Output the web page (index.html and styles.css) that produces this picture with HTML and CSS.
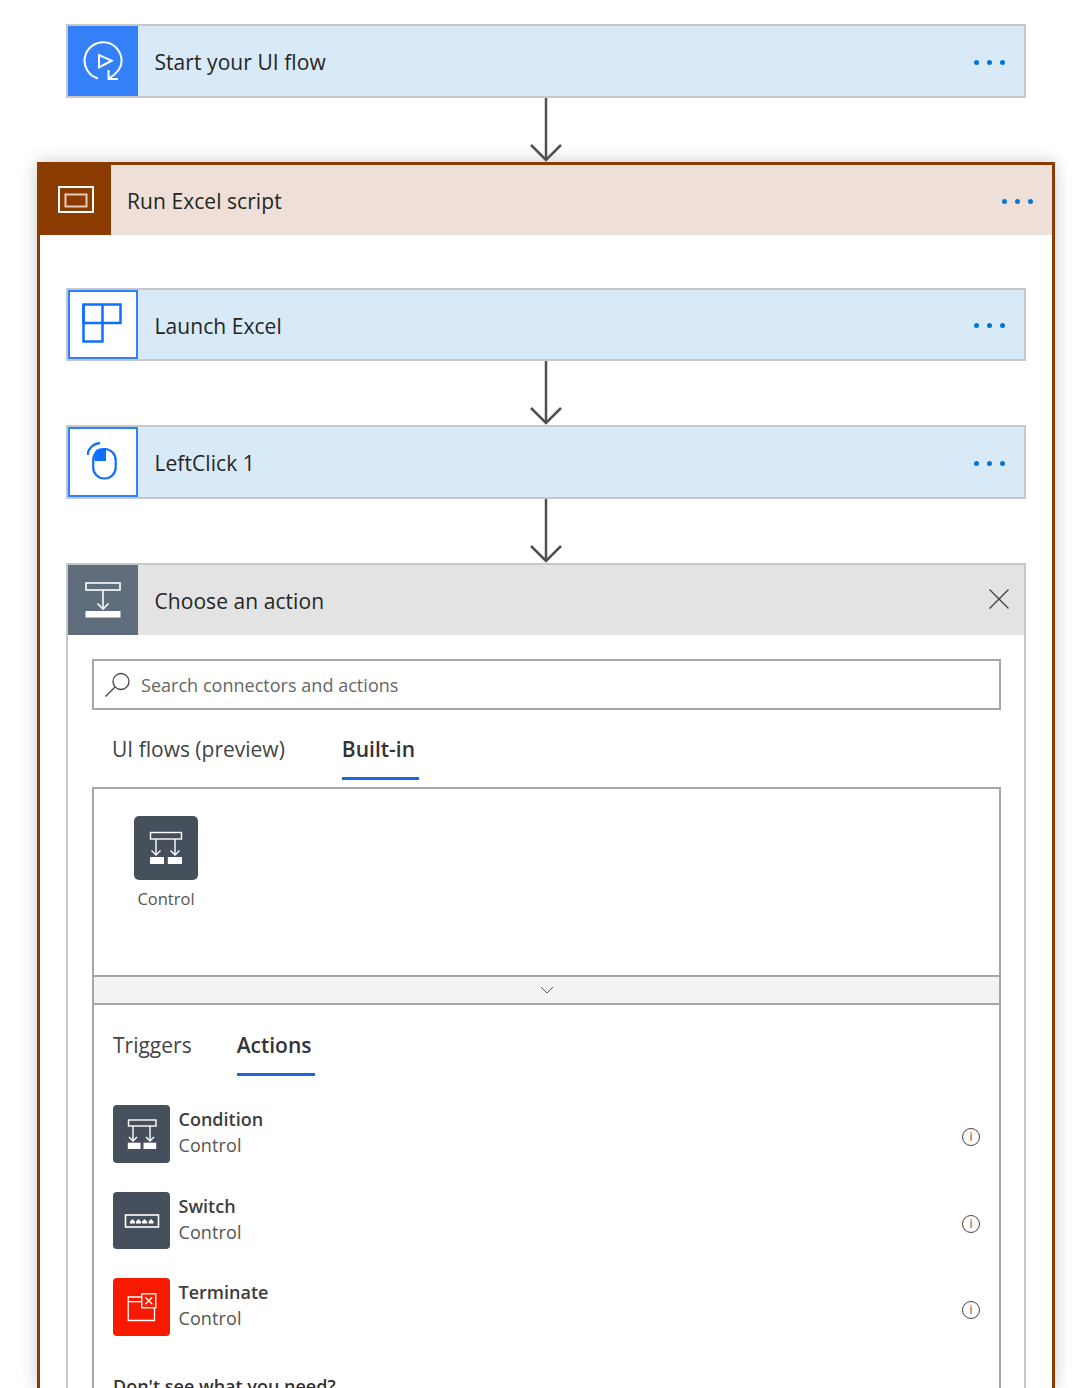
FILE: index.html
```html
<!DOCTYPE html>
<html lang="en">

<head>
    <meta charset="UTF-8">
    <title>UI flow</title>
    <link rel="stylesheet" href="styles.css">
</head>

<body>
    <div class="page">
        <div class="flow">
            <div class="card card-trigger">
                <div class="card-icon icon-blue">
                    <svg width="40" height="40" viewBox="0 0 40 40" fill="none" stroke="#fff" stroke-width="2">
                        <path d="M15 37.500 A18.500 18.500 0 1 1 38.500 21 Q38 30 26 37.500" />
                        <path d="M16 14 V26.300 L28.700 19.700 Z" />
                        <path d="M25.500 29 V38 H35" />
                    </svg>
                </div>
                <div class="card-title">Start your UI flow</div>
                <div class="dots"><span></span><span></span><span></span></div>
            </div>
            <svg class="arrow" width="34" height="64" viewBox="0 0 34 64" fill="none" stroke="#505050" stroke-width="2.5">
                <path d="M17 0 V62" />
                <path d="M2 47 L17 62 L32 47" />
            </svg>
        </div>

        <div class="scope">
            <div class="scope-head">
                <div class="scope-icon">
                    <svg width="36" height="28" viewBox="0 0 36 28" fill="none" stroke="#fff" stroke-width="2">
                        <rect x="1" y="1" width="34" height="25" />
                        <rect x="7.500" y="8.500" width="21" height="12" stroke="#e8cdbd" />
                    </svg>
                </div>
                <div class="card-title">Run Excel script</div>
                <div class="dots"><span></span><span></span><span></span></div>
            </div>

            <div class="scope-body">
                <div class="card card-step card-short">
                    <div class="card-icon icon-white">
                        <svg class="grid-svg" width="40" height="40" viewBox="0 0 40 40" fill="none" stroke="#0f6fff" stroke-width="2.500">
                            <path d="M1.500 1.500 H38.500 V20 H1.500 Z" />
                            <path d="M20.500 1.500 V38.500 H1.500 V1.500" />
                        </svg>
                    </div>
                    <div class="card-title">Launch Excel</div>
                    <div class="dots"><span></span><span></span><span></span></div>
                </div>
                <svg class="arrow" width="34" height="64" viewBox="0 0 34 64" fill="none" stroke="#505050" stroke-width="2.5">
                    <path d="M17 0 V62" />
                    <path d="M2 47 L17 62 L32 47" />
                </svg>
                <div class="card card-step">
                    <div class="card-icon icon-white">
                        <svg width="32" height="40" viewBox="0 0 32 40" fill="none" stroke="#0f6fff" stroke-width="2.200">
                            <rect x="6.200" y="7" width="22.500" height="29.500" rx="11" />
                            <path d="M7.500 19 V12 Q8 7 13 6.500 H19 V19 Z" fill="#0f6fff" stroke="none" />
                            <path d="M0.500 13 A13 13 0 0 1 13 1.200" />
                        </svg>
                    </div>
                    <div class="card-title">LeftClick 1</div>
                    <div class="dots"><span></span><span></span><span></span></div>
                </div>
                <svg class="arrow" width="34" height="64" viewBox="0 0 34 64" fill="none" stroke="#505050" stroke-width="2.5">
                    <path d="M17 0 V62" />
                    <path d="M2 47 L17 62 L32 47" />
                </svg>

                <div class="chooser">
                    <div class="chooser-head">
                        <div class="chooser-icon">
                            <svg width="36" height="36" viewBox="0 0 36 36" fill="none" stroke="#fff" stroke-width="1.600">
                                <rect x="1" y="1" width="34" height="7" />
                                <path d="M18 8 V27" />
                                <path d="M12.500 21.500 L18 27 L23.500 21.500" />
                                <rect x="0.500" y="29" width="35" height="6.500" fill="#fff" stroke="none" />
                            </svg>
                        </div>
                        <div class="card-title">Choose an action</div>
                        <svg class="close" width="22" height="22" viewBox="0 0 22 22" stroke="#444" stroke-width="1.400">
                            <path d="M1.500 1.500 L20.500 20.500 M20.500 1.500 L1.500 20.500" />
                        </svg>
                    </div>

                    <div class="chooser-body">
                        <div class="search">
                            <svg width="28" height="26" viewBox="0 0 28 26" fill="none" stroke="#444" stroke-width="1.300">
                                <circle cx="17" cy="9.500" r="8" />
                                <path d="M11 15 L1.500 24.500" />
                            </svg>
                            <span class="search-text">Search connectors and actions</span>
                        </div>

                        <div class="tabs tabs-top">
                            <div class="tab">UI flows (preview)</div>
                            <div class="tab tab-active">Built-in</div>
                        </div>

                        <div class="panel">
                            <div class="connectors">
                                <div class="connector">
                                    <div class="connector-icon">
                                        <svg width="34" height="34" viewBox="0 0 34 34" fill="none" stroke="#fff" stroke-width="1.400">
                                            <rect x="1.500" y="1.500" width="31" height="6.500" />
                                            <path d="M7 8 V24 M26 8 V24" />
                                            <path d="M2.500 19.500 L7 24 L11.500 19.500 M21.500 19.500 L26 24 L30.500 19.500" />
                                            <rect x="1" y="26" width="14" height="7" fill="#fff" stroke="none" />
                                            <rect x="18.800" y="26" width="14.200" height="7" fill="#fff" stroke="none" />
                                        </svg>
                                    </div>
                                    <div class="connector-name">Control</div>
                                </div>
                            </div>
                            <div class="expander">
                                <svg width="14" height="8" viewBox="0 0 14 8" fill="none" stroke="#555" stroke-width="1">
                                    <path d="M1 1 L7 7 L13 1" />
                                </svg>
                            </div>
                            <div class="tabs tabs-inner">
                                <div class="tab">Triggers</div>
                                <div class="tab tab-active">Actions</div>
                            </div>

                            <div class="actions">
                                <div class="action">
                                    <div class="action-icon">
                                        <svg width="30" height="32" viewBox="0 0 30 32" fill="none" stroke="#fff" stroke-width="1.400">
                                            <rect x="1.500" y="2" width="27.500" height="6" />
                                            <path d="M6 8 V23 M23 8 V23" />
                                            <path d="M2 19 L6 23 L10 19 M19 19 L23 23 L27 19" />
                                            <rect x="0.800" y="24.700" width="12.700" height="6.300" fill="#fff" stroke="none" />
                                            <rect x="16.500" y="24.700" width="12.700" height="6.300" fill="#fff" stroke="none" />
                                        </svg>
                                    </div>
                                    <div class="action-text">
                                        <div class="action-name">Condition</div>
                                        <div class="action-sub">Control</div>
                                    </div>
                                    <div class="info">i</div>
                                </div>
                                <div class="action action-short">
                                    <div class="action-icon">
                                        <svg width="36" height="14" viewBox="0 0 36 14" fill="none" stroke="#fff" stroke-width="1.600">
                                            <rect x="1.500" y="1" width="33" height="12" />
                                            <path d="M6 9.500 V7.500 L8.500 5 L11 7.500 V9.500 Z M12 9.500 V7.500 L14.500 5 L17 7.500 V9.500 Z M18 9.500 V7.500 L20.500 5 L23 7.500 V9.500 Z M24.500 9.500 V7.500 L27 5 L29.500 7.500 V9.500 Z" fill="#fff" stroke="none" />
                                        </svg>
                                    </div>
                                    <div class="action-text">
                                        <div class="action-name">Switch</div>
                                        <div class="action-sub">Control</div>
                                    </div>
                                    <div class="info">i</div>
                                </div>
                                <div class="action">
                                    <div class="action-icon action-red">
                                        <svg width="30" height="30" viewBox="0 0 30 30" fill="none" stroke="#fff" stroke-width="1.300">
                                            <path d="M14.500 5 H1.200 V28.500 H27.500 V16" />
                                            <path d="M1.200 9.700 H14.500" />
                                            <rect x="14.800" y="1.800" width="14" height="14" />
                                            <path d="M18.300 5.300 L25.300 12.300 M25.300 5.300 L18.300 12.300" />
                                        </svg>
                                    </div>
                                    <div class="action-text">
                                        <div class="action-name">Terminate</div>
                                        <div class="action-sub">Control</div>
                                    </div>
                                    <div class="info">i</div>
                                </div>
                            </div>

                            <div class="need">Don't see what you need?</div>
                        </div>
                    </div>
                </div>
            </div>
        </div>
    </div>
</body>

</html>
```

FILE: styles.css
```css
html,
body {
    margin: 0;
    padding: 0;
    background-color: #fff;
}

body {
    height: 1388px;
    overflow: hidden;
    font-family: 'Open Sans', 'Noto Sans', sans-serif;
    color: #252525;
}

.page {
    width: 1086px;
    padding-top: 24px;
}

.flow {
    display: flex;
    flex-direction: column;
    align-items: center;
    width: 960px;
    margin-left: 66px;
}

.card {
    display: flex;
    align-items: center;
    box-sizing: border-box;
    width: 960px;
    height: 74px;
    background-color: #d8e9f8;
    border: 2px solid #c6c8ca;
}

.card-short {
    height: 73px;
}

.card-icon {
    display: flex;
    align-items: center;
    justify-content: center;
    box-sizing: border-box;
    flex: none;
    width: 70px;
    height: 100%;
}

.icon-blue {
    background-color: #3380f8;
}

.icon-white {
    background-color: #fff;
    border: 2px solid #2f80ff;
}

.grid-svg {
    margin: 0 2px 4px 0;
}

.card-title {
    flex: 1;
    padding: 2px 0 0 16.5px;
    font-size: 21px;
    letter-spacing: 0.06px;
    line-height: 28px;
    color: #252525;
}

.dots {
    display: flex;
    gap: 8px;
    margin-top: 2px;
    padding-right: 19px;
}

.dots span {
    width: 5px;
    height: 5px;
    border-radius: 50%;
    background-color: #0078d4;
}

.arrow {
    display: block;
    flex: none;
    position: relative;
    z-index: 1;
}

.scope {
    box-sizing: border-box;
    width: 1018px;
    height: 1226px;
    margin-left: 37px;
    overflow: hidden;
    background-color: #fff;
    border: 3px solid #8b3a00;
    border-bottom: 0;
    box-shadow: 0 0 16px rgba(0, 0, 0, 0.22);
}

.scope-head {
    display: flex;
    align-items: center;
    height: 70px;
    background-color: #eee0d8;
}

.scope-head .card-title {
    padding-left: 16px;
}

.scope-head .dots {
    padding-right: 19.5px;
}

.scope-icon {
    display: flex;
    align-items: center;
    justify-content: center;
    flex: none;
    width: 71px;
    height: 70px;
    background-color: #8b3a00;
}

.scope-body {
    display: flex;
    flex-direction: column;
    align-items: center;
    padding: 53px 26px 0;
}

.chooser {
    box-sizing: border-box;
    width: 960px;
    border: 2px solid #c6c8ca;
    border-bottom: 0;
}

.chooser-head {
    display: flex;
    align-items: center;
    height: 70px;
    background-color: #e3e3e3;
}

.chooser-icon {
    display: flex;
    align-items: center;
    justify-content: center;
    flex: none;
    width: 70px;
    height: 70px;
    background-color: #5f6d7c;
}

.close {
    margin-right: 14px;
    margin-bottom: 3px;
}

.chooser-body {
    padding: 24px 23px 0 24px;
}

.search {
    display: flex;
    align-items: center;
    box-sizing: border-box;
    height: 51px;
    padding-left: 10px;
    border: 2px solid #a6a6a6;
}

.search-text {
    margin-left: 9px;
    font-size: 18px;
    letter-spacing: 0.03px;
    color: #666;
}

.tabs {
    display: flex;
}

.tabs-top {
    height: 70px;
    padding-left: 20px;
    gap: 57px;
}

.tabs-inner {
    height: 71px;
    padding-left: 19px;
    gap: 45px;
}

.tab {
    box-sizing: border-box;
    height: 100%;
    padding-top: 24px;
    font-size: 21px;
    line-height: 30px;
    color: #444;
}

.tabs-inner .tab {
    padding-top: 25px;
}

.tab-active {
    font-weight: 600;
    color: #333;
    border-bottom: 3px solid #1a66e0;
}

.tabs-top .tab-active {
    padding-right: 4px;
}

.tabs-inner .tab-active {
    padding-right: 3px;
}

.panel {
    box-sizing: border-box;
    height: 620px;
    margin-top: 7px;
    border: 2px solid #a6a6a6;
}

.connectors {
    height: 186px;
    box-sizing: border-box;
    padding: 27px 0 0 40px;
}

.connector {
    display: flex;
    flex-direction: column;
    align-items: center;
    width: 64px;
}

.connector-icon {
    display: flex;
    align-items: center;
    justify-content: center;
    width: 64px;
    height: 64px;
    border-radius: 5px;
    background-color: #464f5c;
}

.connector-name {
    margin-top: 7px;
    font-size: 16.5px;
    line-height: 24px;
    color: #555;
}

.expander {
    display: flex;
    align-items: center;
    justify-content: center;
    box-sizing: border-box;
    height: 30px;
    background-color: #f3f3f3;
    border-top: 2px solid #a6a6a6;
    border-bottom: 2px solid #a6a6a6;
}

.actions {
    display: flex;
    flex-direction: column;
    gap: 29px;
    padding: 29px 19px 0;
}

.action {
    display: flex;
    align-items: center;
    height: 58px;
}

.action-short {
    height: 57px;
}

.action-icon {
    display: flex;
    align-items: center;
    justify-content: center;
    flex: none;
    width: 57px;
    height: 100%;
    border-radius: 4px;
    background-color: #464f5c;
}

.action-red {
    background-color: #f81a00;
}

.action-text {
    flex: 1;
    margin-bottom: 4px;
    padding-left: 8.5px;
}

.action-name {
    font-size: 18px;
    font-weight: 600;
    line-height: 26px;
    color: #3d3d3d;
}

.action-sub {
    font-size: 18px;
    letter-spacing: 0.1px;
    line-height: 26px;
    color: #555;
}

.info {
    box-sizing: border-box;
    width: 18px;
    height: 18px;
    margin-top: 6px;
    border: 1px solid #444;
    border-radius: 50%;
    font-size: 12px;
    line-height: 16px;
    text-align: center;
    color: #555;
}

.need {
    padding: 38px 0 0 19px;
    font-size: 18px;
    font-weight: 600;
    line-height: 24px;
    color: #333;
}
```
